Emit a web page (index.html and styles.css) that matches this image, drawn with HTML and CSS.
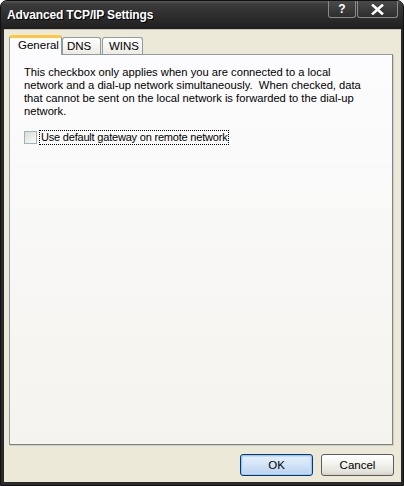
FILE: index.html
```html
<!DOCTYPE html>
<html>
<head>
<meta charset="utf-8">
<link rel="stylesheet" href="styles.css">
</head>
<body>
<div class="window">
  <div class="titlebar">
    <span class="title">Advanced TCP/IP Settings</span>
    <div class="caption-buttons">
      <div class="cap-btn help">?</div>
      <div class="cap-btn close">
        <svg width="13" height="11" viewBox="0 0 13 11"><path d="M2 1.5 L11 9.5 M11 1.5 L2 9.5" stroke="#fff" stroke-width="2.6" stroke-linecap="square"/></svg>
      </div>
    </div>
  </div>
  <div class="client">
    <div class="tabs">
      <div class="tab active">General</div>
      <div class="tab">DNS</div>
      <div class="tab">WINS</div>
    </div>
    <div class="panel">
      <p class="desc">This checkbox only applies when you are connected to a local<br>network and a dial-up network simultaneously.&nbsp; When checked, data<br>that cannot be sent on the local network is forwarded to the dial-up<br>network.</p>
      <label class="check-row">
        <span class="checkbox"></span>
        <span class="check-label">Use default gateway on remote network</span>
      </label>
    </div>
    <div class="footer">
      <button class="btn default">OK</button>
      <button class="btn">Cancel</button>
    </div>
  </div>
</div>
</body>
</html>
```
FILE: styles.css
```css
* { box-sizing: border-box; }
html, body { margin: 0; padding: 0; background: #ffffff; }
body { font-family: "Liberation Sans", Arial, sans-serif; font-size: 11px; color: #000; }

.window {
  width: 404px;
  height: 486px;
  display: flex;
  flex-direction: column;
  background: #2a2a2a;
  border-radius: 7px 7px 0 0;
  border: 1px solid #111;
  overflow: hidden;
}

.titlebar {
  height: 28px;
  flex: none;
  display: flex;
  align-items: flex-start;
  justify-content: space-between;
  background: linear-gradient(#5a5a5a 0px, #3c3c3c 3px, #303030 12px, #262626 22px, #1e1e1e 28px);
  padding-left: 6px;
}

.title {
  margin-top: 7px;
  color: #fff;
  font-weight: bold;
  font-size: 12px;
  letter-spacing: -0.15px;
  text-shadow: 1px 1px 0 #000;
}

.caption-buttons {
  display: flex;
  gap: 1px;
  margin-right: 5px;
}

.cap-btn {
  height: 17px;
  border: 1px solid #8a8a8a;
  border-top: none;
  border-radius: 0 0 3px 3px;
  background: linear-gradient(#4a4a4a, #2e2e2e);
  display: flex;
  align-items: center;
  justify-content: center;
  color: #fff;
  font-weight: bold;
  font-size: 12px;
}
.cap-btn.help { width: 28px; }
.cap-btn.close { width: 41px; }

.client {
  flex: 1;
  display: flex;
  flex-direction: column;
  background: #ece9d8;
  margin: 0 2px 3px 3px;
  border-top: 1px solid #c8c6ba;
  padding: 5px 8px 0 5px;
}

.tabs {
  display: flex;
  align-items: flex-end;
  height: 19px;
  padding-left: 1px;
  position: relative;
  z-index: 1;
}

.tab {
  height: 17px;
  border: 1px solid #919b9c;
  border-bottom: none;
  border-radius: 3px 3px 0 0;
  background: linear-gradient(#ffffff, #ecebe5);
  padding: 2px 7px 0 7px;
  margin-right: 1px;
  line-height: 13px;
  font-size: 11.5px;
}
.tab:nth-child(2) { width: 39px; padding-left: 4px; }
.tab:nth-child(3) { width: 41px; padding-left: 6px; }

.tab.active {
  height: 20px;
  width: 53px;
  margin-right: 0;
  margin-left: -1px;
  background: #fcfcfe;
  border-top: 3px solid #ffc83c;
  padding: 1px 0 0 8px;
  margin-bottom: -1px;
}

.panel {
  height: 391px;
  border: 1px solid #919b9c;
  border-right-color: #7d8586;
  border-bottom-color: #7d8586;
  background: linear-gradient(#fcfcfe, #f4f3ee);
  padding: 11px 10px 0 14px;
  box-shadow: 1px 1px 0 #d0cdc0;
}

.desc {
  margin: 0;
  line-height: 13px;
  font-size: 11.2px;
  white-space: nowrap;
}

.check-row {
  display: flex;
  align-items: center;
  margin-top: 12px;
}

.checkbox {
  width: 13px;
  height: 13px;
  border: 1px solid #9eb2c0;
  background: linear-gradient(135deg, #dcdcd7, #fbfbf9);
  flex: none;
}

.check-label {
  margin-left: 2px;
  padding: 0 1px 1px 1px;
  border: 1px dotted #000;
  line-height: 12px;
  font-size: 11px;
  letter-spacing: -0.2px;
}

.footer {
  display: flex;
  justify-content: flex-end;
  gap: 8px;
  padding-top: 9px;
  margin-right: -1px;
}

.btn {
  width: 73px;
  height: 22px;
  font-family: "Liberation Sans", Arial, sans-serif;
  font-size: 11.5px;
  color: #000;
  border: 1px solid #003c74;
  border-radius: 3px;
  background: linear-gradient(#ffffff 0%, #f4f4f0 40%, #e3e2da 85%, #d6d0c5 100%);
  padding: 0;
}
.btn.default {
  box-shadow: inset 0 0 0 1px #9ec3f0, inset 0 0 0 2px #c6dcf5;
  background: linear-gradient(#e7f0fb 0%, #d3e3f6 50%, #b8d0ee 100%);
}
.btn:not(.default) {
  border-color: #5c5c5c;
}
```
